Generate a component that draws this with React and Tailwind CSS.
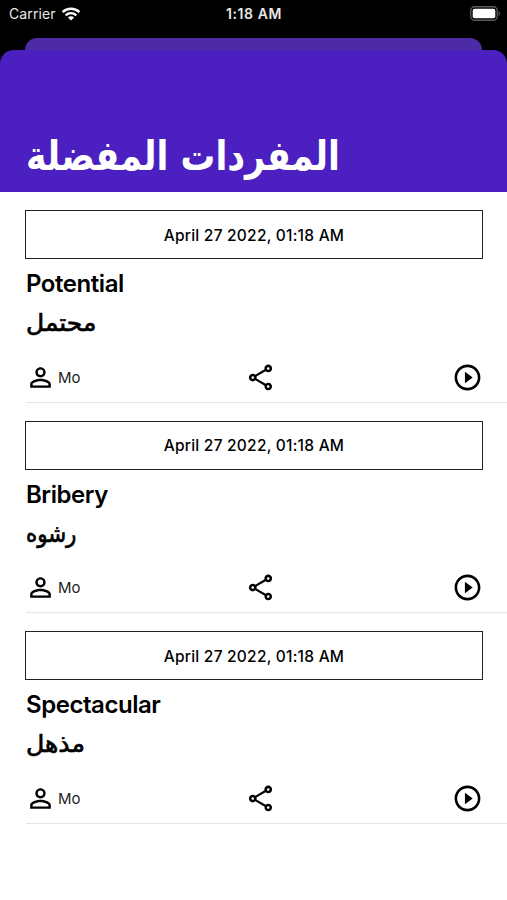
import { MdPersonOutline, MdOutlineShare, MdPlayCircleOutline } from 'react-icons/md'

const WORDS = [
  { id: 1, date: 'April 27 2022, 01:18 AM', word: 'Potential', meaning: 'محتمل', fit: 'scale-x-[1.04]', user: 'Mo' },
  { id: 2, date: 'April 27 2022, 01:18 AM', word: 'Bribery', meaning: 'رشوه', fit: 'scale-x-[0.89]', user: 'Mo' },
  { id: 3, date: 'April 27 2022, 01:18 AM', word: 'Spectacular', meaning: 'مذهل', fit: 'scale-x-[1.05]', user: 'Mo' },
]

function WifiIcon() {
  return (
    <svg width="20" height="14" viewBox="0 0 20 14" fill="none" stroke="white" strokeWidth="2.4">
      <path d="M1.6 5.2a12 12 0 0 1 16.8 0" />
      <path d="M4.7 8.3a7.6 7.6 0 0 1 10.6 0" />
      <path d="M10 13.6 6.9 10.5a4.4 4.4 0 0 1 6.2 0z" fill="white" stroke="none" />
    </svg>
  )
}

function BatteryIcon() {
  return (
    <svg width="31" height="15" viewBox="0 0 31 15">
      <rect x="0.75" y="0.75" width="26.5" height="13.5" rx="4" fill="none" stroke="#5c5c5c" strokeWidth="1.3" />
      <rect x="2.7" y="2.7" width="22.6" height="9.6" rx="2" fill="white" />
      <path d="M28.6 5.2c1.8.6 1.8 4 0 4.6z" fill="#5c5c5c" />
    </svg>
  )
}

function StatusBar() {
  return (
    <div className="grid h-[38px] grid-cols-3 items-start pl-[7px] pr-[6px] pt-[4px] text-[14px] leading-5 text-[#e8e8e8]">
      <div className="flex items-center gap-[5px] pl-[2px] tracking-[0.1px]">
        <span>Carrier</span>
        <WifiIcon />
      </div>
      <span className="text-center font-semibold tracking-[0.55px]">1:18 AM</span>
      <div className="flex justify-end pt-[2px]">
        <BatteryIcon />
      </div>
    </div>
  )
}

function WordItem({ item }) {
  return (
    <div className="ml-[26px] h-[210.5px] border-b border-[#e6e6e6] pt-[18px]">
      <div className="-ml-px mr-[24px] flex h-[49px] items-center justify-center border border-[#222] pt-[2px] text-[15.5px] font-medium tracking-[0.23px]">
        {item.date}
      </div>
      <h2 className="mt-[9px] text-[24px] font-semibold leading-8 tracking-[-0.45px]">{item.word}</h2>
      <p className="mt-[7px] font-['DejaVu_Sans',sans-serif] text-[24px] leading-8 [-webkit-text-stroke:0.7px_black]">
        <bdi className={`inline-block origin-left ${item.fit}`}>{item.meaning}</bdi>
      </p>
      <div className="mr-[24px] mt-[22px] flex h-8 items-center justify-between">
        <div className="-ml-px flex w-[88px] items-center gap-[2px] text-[15px]">
          <MdPersonOutline size={31} />
          <span className="pt-[2px] tracking-[-0.1px] text-[#222]">{item.user}</span>
        </div>
        <MdOutlineShare size={31} />
        <div className="flex w-[75px] justify-end">
          <MdPlayCircleOutline size={31} />
        </div>
      </div>
    </div>
  )
}

export default function App() {
  return (
    <div className="flex h-[900px] w-[507px] flex-col overflow-hidden bg-black font-[Inter,sans-serif] text-black">
      <StatusBar />
      <div className="mx-[25px] h-[12px] shrink-0 rounded-t-[12px] bg-[#4d2ba6]" />
      <header className="flex h-[142px] shrink-0 items-end rounded-t-[14px] bg-[#4b1fc0] pb-[11px] pl-[26px]">
        <h1 className="font-['DejaVu_Sans',sans-serif] text-[41px] font-bold leading-[50px] text-white">
          <bdi className="inline-block origin-left scale-x-[0.846]">المفردات المفضلة</bdi>
        </h1>
      </header>
      <main className="flex-1 bg-white">
        {WORDS.map((item) => (
          <WordItem key={item.id} item={item} />
        ))}
      </main>
    </div>
  )
}
